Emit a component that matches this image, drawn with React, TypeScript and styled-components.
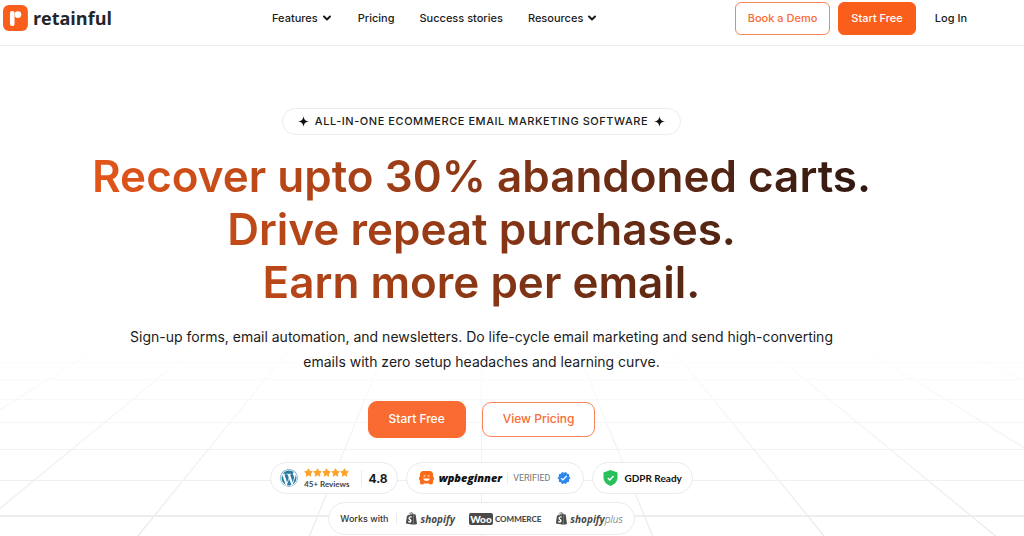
import React from "react";
import styled, { createGlobalStyle } from "styled-components";
import { ChevronDown } from "lucide-react";
import { FaWordpress, FaShopify, FaStar } from "react-icons/fa6";
import { MdVerified } from "react-icons/md";

const GlobalStyle = createGlobalStyle`
  *, *::before, *::after { box-sizing: border-box; }
  body {
    margin: 0;
    background: #fff;
    color: #1b1b1b;
    font-family: Inter, "Liberation Sans", sans-serif;
    overflow-x: hidden;
  }
  a { color: inherit; text-decoration: none; }
  button { font-family: inherit; cursor: pointer; }
`;

const Header = styled.header`
  display: flex;
  align-items: flex-start;
  height: 46px;
  padding: 2px 57px 0 3px;
  border-bottom: 1px solid #ebebeb;
`;

const Brand = styled.a`
  display: flex;
  align-items: center;
  gap: 5px;
  height: 32px;
  width: 109px;
  font: 700 18px/32px "Open Sans", sans-serif;
  color: #23262b;
`;

const Nav = styled.nav`
  display: flex;
  align-items: center;
  gap: 25px;
  height: 31px;
  margin-left: 160px;
`;

const navText = `
  font-family: inherit;
  font-size: 11px;
  font-weight: 500;
  line-height: 16px;
  color: #1b1b1b;
`;

const NavLink = styled.a`
  ${navText}
`;

const NavMenu = styled.button`
  ${navText}
  display: flex;
  align-items: center;
  gap: 3px;
  padding: 0;
  border: 0;
  background: none;
`;

const Actions = styled.div`
  display: flex;
  align-items: center;
  gap: 8px;
  margin-left: auto;
`;

const Button = styled.button<{ $filled?: boolean; $large?: boolean }>`
  height: ${(p) => (p.$large ? (p.$filled ? 37 : 35) : 33)}px;
  padding: 0 ${(p) => (p.$large ? 20 : 12)}px 2px;
  border: 1px solid ${(p) => (p.$filled ? (p.$large ? "#fa6b31" : "#fa5e1b") : "#fa8357")};
  border-radius: ${(p) => (p.$large ? 9 : 6)}px;
  background: ${(p) => (p.$filled ? (p.$large ? "#fa6b31" : "#fa5e1b") : "#fff")};
  color: ${(p) => (p.$filled ? "#fff" : "#fa6b35")};
  font-size: ${(p) => (p.$large ? 12 : 11)}px;
  font-weight: 500;
  white-space: nowrap;
`;

const LogIn = styled.a`
  ${navText}
  margin-left: 11px;
  padding-bottom: 2px;
`;

const Hero = styled.main`
  position: relative;
  display: flex;
  flex-direction: column;
  align-items: center;
  min-height: calc(100vh - 46px);
  padding: 62px 61px 0 0;
  text-align: center;
`;

const Floor = styled.svg`
  position: absolute;
  left: 0;
  bottom: 0;
  z-index: -1;
  width: 100%;
  height: 196px;
`;

const Tagline = styled.p`
  display: flex;
  align-items: center;
  gap: 6px;
  height: 27px;
  margin: 0;
  padding: 0 15px 1px;
  border: 1px solid #ececec;
  border-radius: 14px;
  background: #fff;
  font-size: 11px;
  font-weight: 500;
  letter-spacing: 0.05em;
  white-space: nowrap;
`;

const Title = styled.h1`
  width: 100%;
  margin: 15px 0 0;
  background: linear-gradient(to right, #f95d1b, #1a1110);
  background-clip: text;
  -webkit-background-clip: text;
  color: transparent;
  font-size: 44px;
  font-weight: 600;
  line-height: 53px;
`;

const Lead = styled.p`
  max-width: 720px;
  margin: 15px 0 0;
  font-size: 14px;
  line-height: 25px;
`;

const Row = styled.div<{ $gap: number; $top: number }>`
  display: flex;
  align-items: center;
  justify-content: center;
  gap: ${(p) => p.$gap}px;
  margin-top: ${(p) => p.$top}px;
`;

const Pill = styled.div<{ $tall?: boolean; $gap: number; $pad: number }>`
  display: flex;
  align-items: center;
  gap: ${(p) => p.$gap}px;
  height: ${(p) => (p.$tall ? 33 : 32)}px;
  padding: 0 ${(p) => p.$pad}px;
  border: 1px solid #ebebeb;
  border-radius: 17px;
  background: #fff;
  white-space: nowrap;
`;

const Divider = styled.span<{ $height: number }>`
  width: 1px;
  height: ${(p) => p.$height}px;
  background: #ebebeb;
`;

const Reviews = styled.div`
  display: flex;
  flex-direction: column;
  align-items: flex-start;
  gap: 2px;
  margin-right: 6px;
  font: 700 8px/10px Lato, sans-serif;
  color: #444;
`;

const Stars = styled.span`
  display: flex;
  color: #fda42c;
`;

const Score = styled.strong`
  font-size: 12px;
  font-weight: 700;
`;

const WpBeginner = styled.span`
  font: italic 800 11px/16px "Open Sans", sans-serif;
  color: #111;
`;

const Verified = styled.span`
  margin: 0 2px 0 0;
  font: 400 9px/12px Roboto, sans-serif;
  color: #777;
`;

const Gdpr = styled.span`
  font: 700 10px/14px Lato, sans-serif;
  color: #111;
`;

const WorksWith = styled.span`
  font-size: 9px;
  font-weight: 500;
  color: #333;
`;

const Partner = styled.span`
  display: flex;
  align-items: center;
  gap: 2px;
  color: #4a4a4a;

  & + & {
    margin-left: 6px;
  }
`;

const ShopifyName = styled.span`
  font: italic 700 10px/16px "Open Sans", sans-serif;
`;

const Thin = styled.span`
  font-weight: 300;
`;

const WooName = styled.span`
  font: 900 8px/12px Lato, sans-serif;
`;

const WooBadge = styled.span`
  display: flex;
  align-items: center;
  justify-content: center;
  width: 24px;
  height: 12px;
  border-radius: 2px;
  background: #4a4a4a;
  color: #fff;
  font: 900 10px/12px Lato, sans-serif;
`;

const Sparkle = () => (
  <svg width="11" height="11" viewBox="0 0 12 12" aria-hidden="true">
    <path d="M6 0C6.5 4 8 5.5 12 6C8 6.5 6.5 8 6 12C5.5 8 4 6.5 0 6C4 5.5 5.5 4 6 0Z" fill="#111" />
  </svg>
);

const HORIZON = 113;
const CENTRE = 481;
const spread = (y: number) => (y - HORIZON) * 0.4055;

const FloorGrid = () => (
  <Floor viewBox="0 340 1024 196" preserveAspectRatio="xMidYMax slice" aria-hidden="true">
    <defs>
      <linearGradient id="fade" gradientUnits="userSpaceOnUse" x1="0" y1="350" x2="0" y2="536">
        <stop offset="0" stopColor="#fdfdfd" />
        <stop offset="0.5" stopColor="#f3f3f3" />
        <stop offset="1" stopColor="#ebebeb" />
      </linearGradient>
    </defs>
    {[362, 379, 399, 422, 449, 480, 515].map((y) => (
      <rect key={y} x="0" y={y} width="1024" height={y > 500 ? 2 : 1} fill="url(#fade)" />
    ))}
    {[-6, -5, -4, -3, -2, -1, 1, 2, 3, 4, 5, 6].map((k) => (
      <path
        key={k}
        d={`M${CENTRE + k * spread(350)} 350L${CENTRE + k * spread(536)} 536`}
        stroke="url(#fade)"
        strokeWidth="1.3"
      />
    ))}
    <rect x={CENTRE} y="350" width="1" height="186" fill="url(#fade)" />
  </Floor>
);

export default function App() {
  return (
    <>
      <GlobalStyle />
      <Header>
        <Brand href="#">
          <svg width="25" height="26" viewBox="0 0 25 26" aria-hidden="true">
            <rect width="25" height="26" rx="6" fill="#fa5e1b" />
            <rect x="7" y="6" width="4.6" height="15" rx="2" fill="#fff" />
            <circle cx="15" cy="9.6" r="3.4" fill="#fff" />
          </svg>
          retainful
        </Brand>
        <Nav>
          <NavMenu type="button">
            Features <ChevronDown size={12} strokeWidth={4} />
          </NavMenu>
          <NavLink href="#">Pricing</NavLink>
          <NavLink href="#">Success stories</NavLink>
          <NavMenu type="button">
            Resources <ChevronDown size={12} strokeWidth={4} />
          </NavMenu>
        </Nav>
        <Actions>
          <Button type="button">Book a Demo</Button>
          <Button type="button" $filled>Start Free</Button>
          <LogIn href="#">Log In</LogIn>
        </Actions>
      </Header>
      <Hero>
        <FloorGrid />
        <Tagline>
          <Sparkle />
          ALL-IN-ONE ECOMMERCE EMAIL MARKETING SOFTWARE
          <Sparkle />
        </Tagline>
        <Title>
          Recover upto 30% abandoned carts.
          <br />
          Drive repeat purchases.
          <br />
          Earn more per email.
        </Title>
        <Lead>
          Sign-up forms, email automation, and newsletters. Do life-cycle email marketing and send high-converting
          emails with zero setup headaches and learning curve.
        </Lead>
        <Row $gap={16} $top={27}>
          <Button type="button" $filled $large>Start Free</Button>
          <Button type="button" $large>View Pricing</Button>
        </Row>
        <Row $gap={8} $top={24}>
          <Pill $gap={6} $pad={9}>
            <FaWordpress size={18} color="#2a7ba3" />
            <Reviews>
              <Stars>
                {[0, 1, 2, 3, 4].map((n) => (
                  <FaStar key={n} size={9} />
                ))}
              </Stars>
              45+ Reviews
            </Reviews>
            <Divider $height={17} />
            <Score>4.8</Score>
          </Pill>
          <Pill $gap={5} $pad={12}>
            <svg width="15" height="14" viewBox="0 0 15 14" aria-hidden="true">
              <path
                d="M4.5 0H10.5Q14 0 14 3.5V5.5Q15 6 15 7.5T14 9.5V11.5Q14 13.5 12 13.5Q10.5 13.5 10 12.5H5Q4.5 13.5 3 13.5Q1 13.5 1 11.5V9.5Q0 9 0 7.5T1 5.5V3.5Q1 0 4.5 0Z"
                fill="#fa6a17"
              />
              <path d="M4.5 5H6.5M8.5 5H10.5" stroke="#fff" strokeWidth="1" />
              <path d="M4 7.5H11Q10 10 7.5 10T4 7.5Z" fill="#fff" />
            </svg>
            <WpBeginner>wpbeginner</WpBeginner>
            <Divider $height={11} />
            <Verified>VERIFIED</Verified>
            <MdVerified size={14} color="#2f86eb" />
          </Pill>
          <Pill $gap={6} $pad={10}>
            <svg width="15" height="16" viewBox="0 0 15 16" aria-hidden="true">
              <path d="M7.5 0L14.5 2.5V7.5C14.5 11.5 11.5 14.5 7.5 16C3.5 14.5 .5 11.5 .5 7.5V2.5Z" fill="#27c05a" />
              <path d="M4.8 8L6.8 10L10.5 6" fill="none" stroke="#fff" strokeWidth="1.4" />
            </svg>
            <Gdpr>GDPR Ready</Gdpr>
          </Pill>
        </Row>
        <Row $gap={8} $top={8}>
          <Pill $tall $gap={8} $pad={11}>
            <WorksWith>Works with</WorksWith>
            <Divider $height={11} />
            <Partner>
              <FaShopify size={13} />
              <ShopifyName>shopify</ShopifyName>
            </Partner>
            <Partner>
              <WooBadge>Woo</WooBadge>
              <WooName>COMMERCE</WooName>
            </Partner>
            <Partner>
              <FaShopify size={13} />
              <ShopifyName>
                shopify<Thin>plus</Thin>
              </ShopifyName>
            </Partner>
          </Pill>
        </Row>
      </Hero>
    </>
  );
}
